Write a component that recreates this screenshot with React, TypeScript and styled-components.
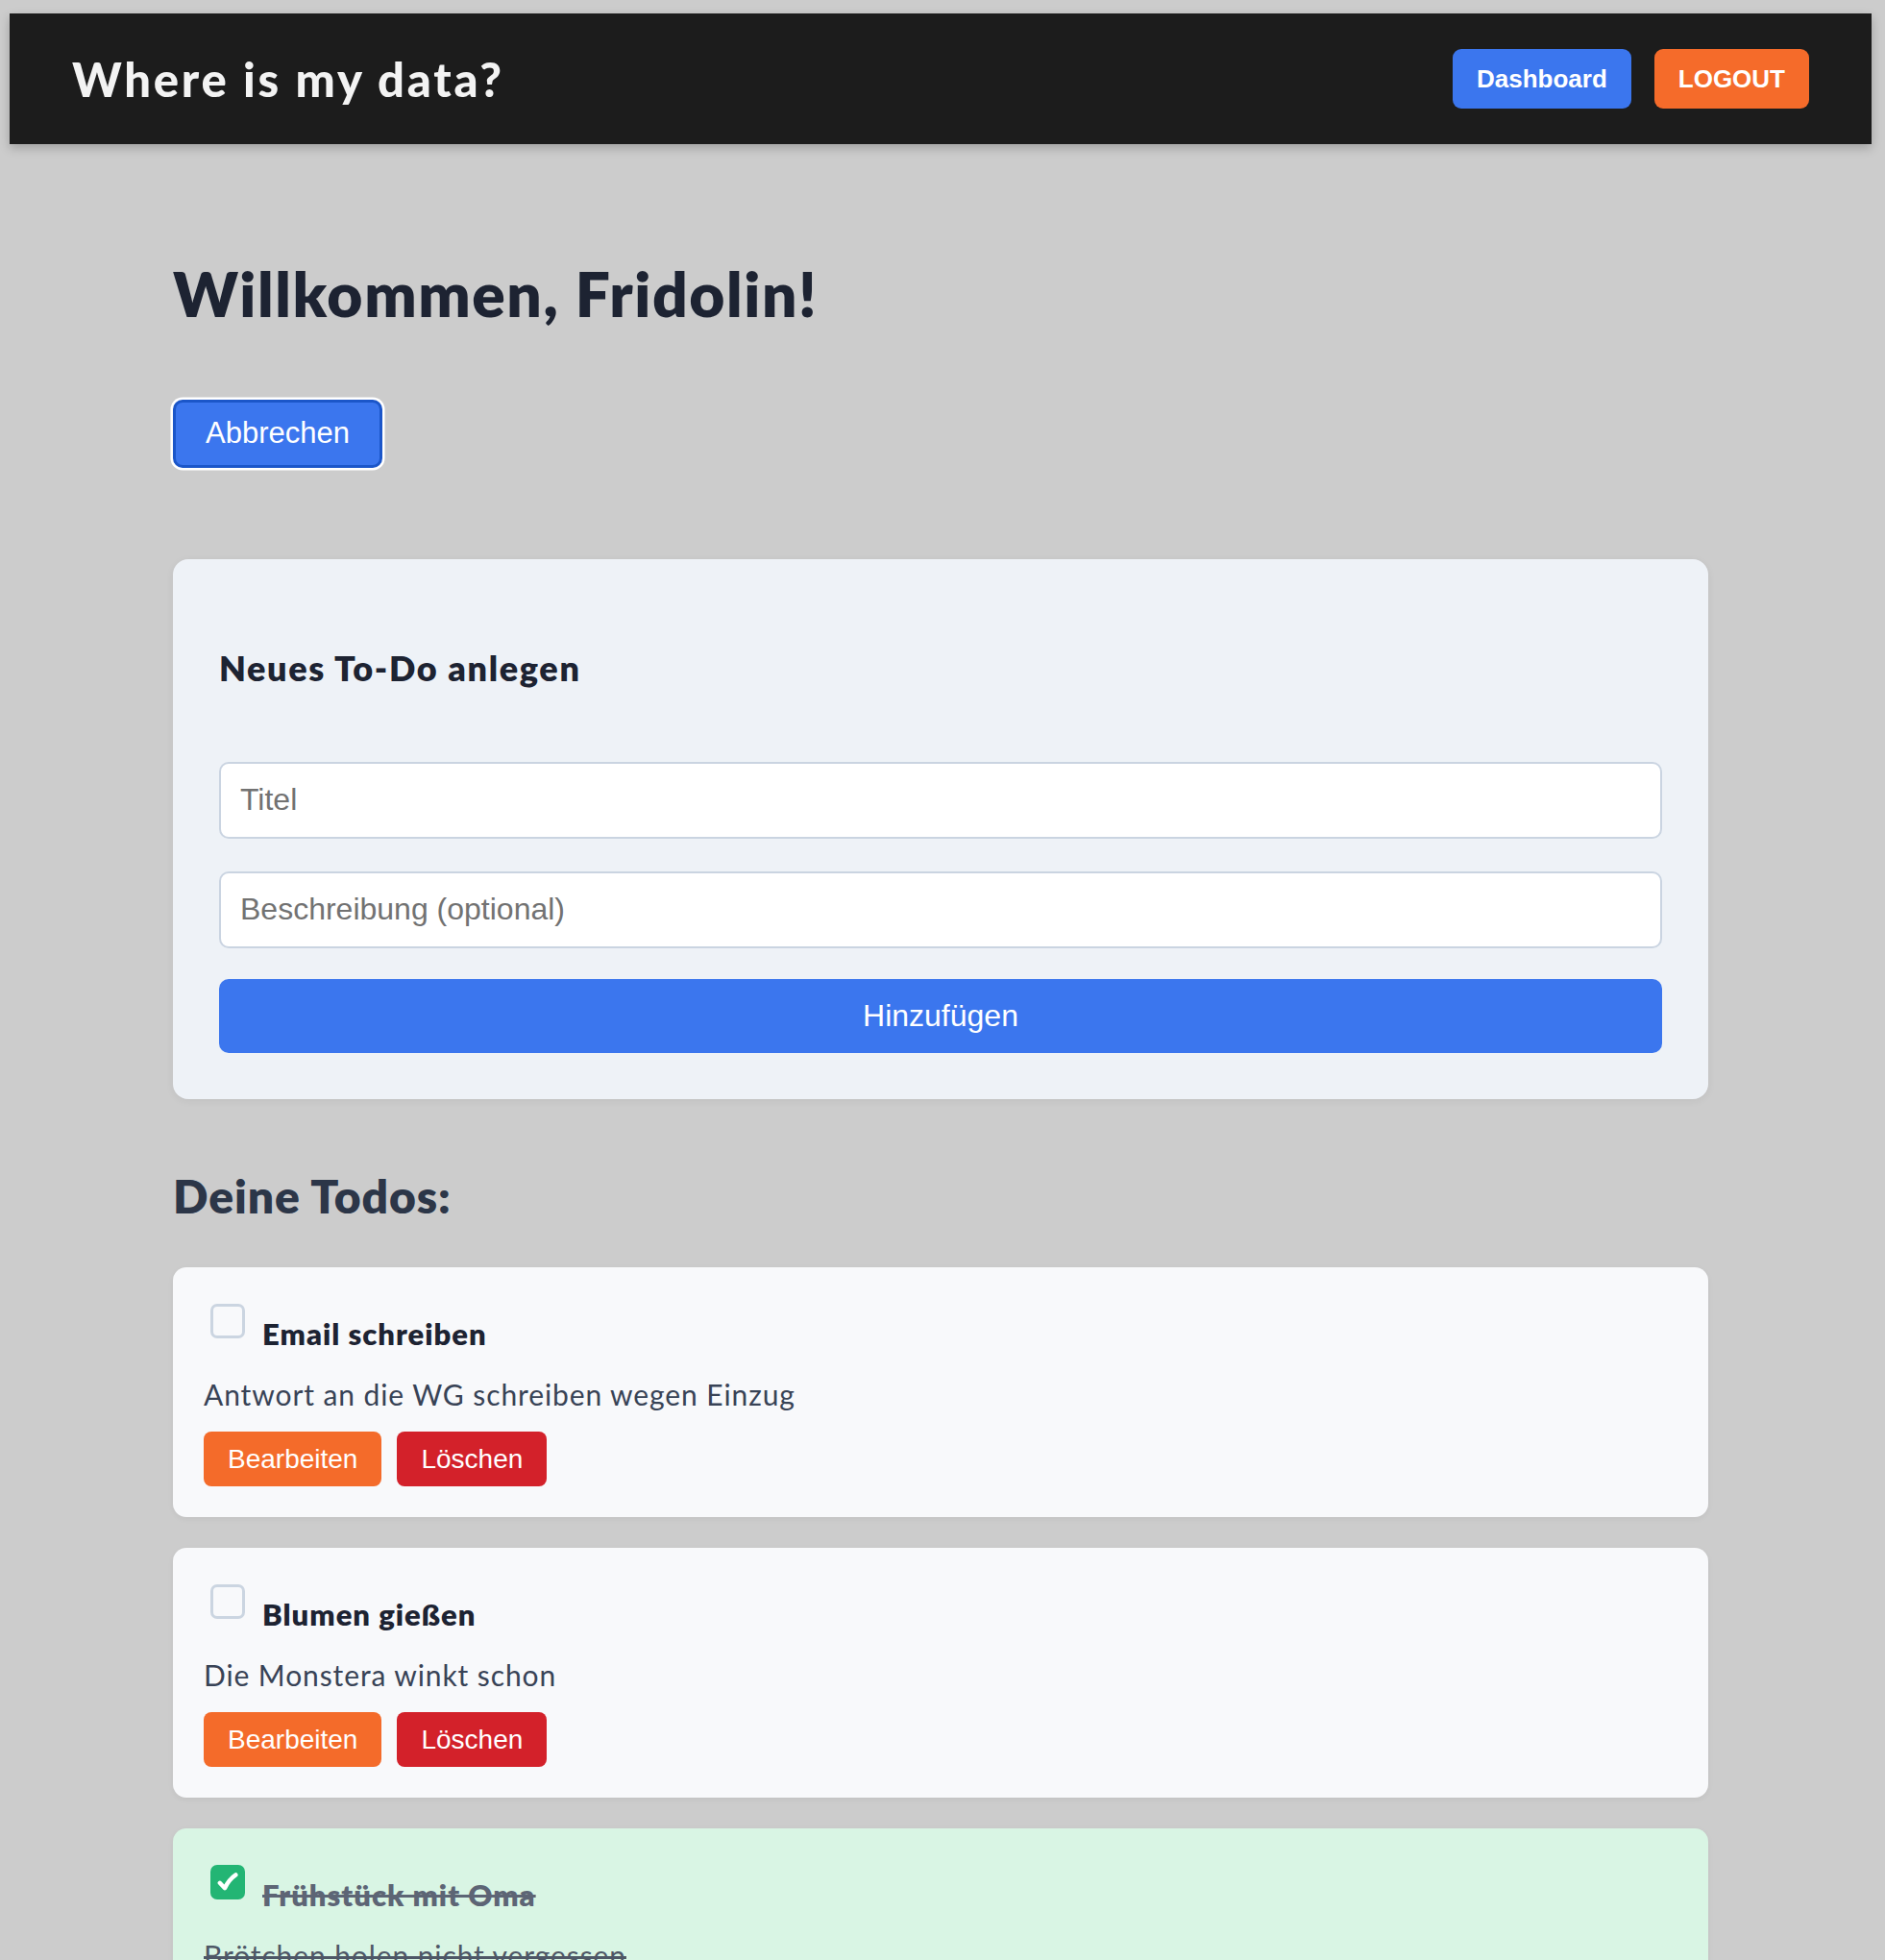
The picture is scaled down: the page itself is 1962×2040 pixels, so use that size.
import React from "react";
import styled, { createGlobalStyle } from "styled-components";

const GlobalStyle = createGlobalStyle`
  html, body {
    margin: 0;
    padding: 0;
    background: #cccccc;
  }
  * { box-sizing: border-box; }
`;

const Page = styled.div`
  padding: 14px 14px 60px 10px;
  font-family: Lato, "Open Sans", sans-serif;
`;

const Header = styled.header`
  height: 136px;
  background: #1c1c1c;
  display: flex;
  align-items: center;
  justify-content: space-between;
  padding: 0 65px 0 65px;
  box-shadow: 0 4px 10px rgba(0, 0, 0, 0.22);
`;

const Brand = styled.div`
  font-family: Lato, sans-serif;
  font-weight: 900;
  font-size: 49px;
  line-height: 1.2;
  color: #f3f3f3;
  letter-spacing: 2.8px;
`;

const Nav = styled.nav`
  display: flex;
  gap: 24px;
`;

const NavButton = styled.button<{ $tone: "blue" | "orange" }>`
  height: 62px;
  padding: 0 25px;
  border: none;
  border-radius: 9px;
  font-family: "Liberation Sans", Arial, sans-serif;
  font-weight: 700;
  font-size: 26px;
  color: #ffffff;
  background: ${(p) => (p.$tone === "blue" ? "#3b76ee" : "#f56b2a")};
`;

const Main = styled.main`
  width: 1598px;
  margin: 0 auto;
`;

const Welcome = styled.h1`
  margin: 118px 0 0;
  font-size: 64px;
  line-height: 1.2;
  font-weight: 800;
  letter-spacing: 1.6px;
  color: #1d2332;
`;

const CancelButton = styled.button`
  display: block;
  margin-top: 71px;
  height: 71px;
  padding: 0 31px;
  border: 3px solid #1b56c9;
  border-radius: 10px;
  background: #3b76ee;
  color: #ffffff;
  font-family: "Liberation Sans", Arial, sans-serif;
  font-size: 31px;
  box-shadow: 0 0 0 2.5px #ffffff;
`;

const FormCard = styled.section`
  margin-top: 95px;
  background: #eef2f7;
  border-radius: 16px;
  padding: 48px;
  box-shadow: 0 2px 8px rgba(0, 0, 0, 0.06);
`;

const FormTitle = styled.h3`
  margin: 44px 0 0;
  font-size: 36px;
  line-height: 43px;
  font-weight: 800;
  letter-spacing: 1.65px;
  color: #1d2332;
`;

const Field = styled.input<{ $gap: number }>`
  display: block;
  width: 100%;
  height: 80px;
  margin-top: ${(p) => p.$gap}px;
  padding: 0 20px;
  border: 2px solid #cad4e1;
  border-radius: 10px;
  background: #ffffff;
  font-family: "Liberation Sans", Arial, sans-serif;
  font-size: 32px;
  color: #222;
  outline: none;
  &::placeholder {
    color: #727272;
  }
`;

const SubmitButton = styled.button`
  display: block;
  width: 100%;
  height: 77px;
  margin-top: 32px;
  border: none;
  border-radius: 10px;
  background: #3b76ee;
  color: #ffffff;
  font-family: "Liberation Sans", Arial, sans-serif;
  font-size: 32px;
`;

const ListTitle = styled.h2`
  margin: 72px 0 0;
  font-size: 48px;
  line-height: 1.2;
  font-weight: 800;
  letter-spacing: 0.9px;
  color: #2c3648;
`;

const TodoList = styled.div`
  margin-top: 46px;
  display: flex;
  flex-direction: column;
  gap: 32px;
`;

const TodoCard = styled.article<{ $done: boolean }>`
  background: ${(p) => (p.$done ? "#d9f5e4" : "#f8f9fb")};
  border-radius: 14px;
  padding: 32px;
  box-shadow: 0 2px 6px rgba(0, 0, 0, 0.05);
`;

const TitleRow = styled.div`
  display: flex;
  align-items: flex-start;
`;

const Check = styled.span<{ $done: boolean }>`
  flex: none;
  width: 36px;
  height: 36px;
  margin: 6px 18px 0 7px;
  border-radius: 7px;
  display: flex;
  align-items: center;
  justify-content: center;
  border: ${(p) => (p.$done ? "none" : "3px solid #cbd5e1")};
  background: ${(p) => (p.$done ? "#23b574" : "transparent")};
`;

const TodoTitle = styled.h4<{ $done: boolean }>`
  margin: 18px 0 0;
  font-size: 31px;
  line-height: 38px;
  font-weight: 800;
  letter-spacing: 1px;
  color: ${(p) => (p.$done ? "#5d6575" : "#1d2332")};
  text-decoration: ${(p) => (p.$done ? "line-through" : "none")};
`;

const TodoText = styled.p<{ $done: boolean }>`
  margin: 26px 0 0;
  font-size: 30px;
  line-height: 36px;
  letter-spacing: 0.9px;
  color: ${(p) => (p.$done ? "#4e5766" : "#384356")};
  text-decoration: ${(p) => (p.$done ? "line-through" : "none")};
`;

const Actions = styled.div`
  margin-top: 21px;
  display: flex;
  gap: 16px;
`;

const ActionButton = styled.button<{ $tone: "edit" | "delete" }>`
  height: 57px;
  padding: 0 25px;
  border: none;
  border-radius: 8px;
  background: ${(p) => (p.$tone === "edit" ? "#f46b2a" : "#d3212a")};
  color: #ffffff;
  font-family: "Liberation Sans", Arial, sans-serif;
  font-size: 28px;
`;

const CheckMark = () => (
  <svg width="22" height="20" viewBox="0 0 22 20" aria-hidden="true">
    <path
      d="M2.8 10.8 L8 16.2 C11 10 14.6 5.6 19.4 2.4"
      fill="none"
      stroke="#ffffff"
      strokeWidth="4.4"
      strokeLinecap="round"
      strokeLinejoin="round"
    />
  </svg>
);

type Todo = { title: string; text: string; done: boolean };

const todos: Todo[] = [
  { title: "Email schreiben", text: "Antwort an die WG schreiben wegen Einzug", done: false },
  { title: "Blumen gießen", text: "Die Monstera winkt schon", done: false },
  { title: "Frühstück mit Oma", text: "Brötchen holen nicht vergessen", done: true },
];

export default function App() {
  return (
    <>
      <GlobalStyle />
      <Page>
        <Header>
          <Brand>Where is my data?</Brand>
          <Nav>
            <NavButton $tone="blue">Dashboard</NavButton>
            <NavButton $tone="orange">LOGOUT</NavButton>
          </Nav>
        </Header>
        <Main>
          <Welcome>Willkommen, Fridolin!</Welcome>
          <CancelButton>Abbrechen</CancelButton>
          <FormCard>
            <FormTitle>Neues To-Do anlegen</FormTitle>
            <Field $gap={76} placeholder="Titel" />
            <Field $gap={34} placeholder="Beschreibung (optional)" />
            <SubmitButton>Hinzufügen</SubmitButton>
          </FormCard>
          <ListTitle>Deine Todos:</ListTitle>
          <TodoList>
            {todos.map((t) => (
              <TodoCard key={t.title} $done={t.done}>
                <TitleRow>
                  <Check $done={t.done}>{t.done && <CheckMark />}</Check>
                  <TodoTitle $done={t.done}>{t.title}</TodoTitle>
                </TitleRow>
                <TodoText $done={t.done}>{t.text}</TodoText>
                <Actions>
                  <ActionButton $tone="edit">Bearbeiten</ActionButton>
                  <ActionButton $tone="delete">Löschen</ActionButton>
                </Actions>
              </TodoCard>
            ))}
          </TodoList>
        </Main>
      </Page>
    </>
  );
}
